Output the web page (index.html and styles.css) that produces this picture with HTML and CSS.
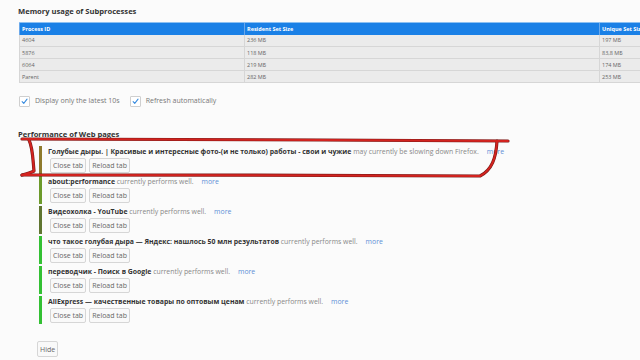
FILE: index.html
```html
<!DOCTYPE html>
<html lang="ru">
<head>
<meta charset="utf-8">
<title>about:performance</title>
<link rel="stylesheet" href="styles.css">
</head>
<body>
<div class="page">
  <h2 class="heading">Memory usage of Subprocesses</h2>
  <div class="mem-wrap">
  <table class="mem">
    <thead>
      <tr><th class="c-id">Process ID</th><th class="c-rss">Resident Set Size</th><th class="c-uss">Unique Set Size</th></tr>
    </thead>
    <tbody>
      <tr><td>4604</td><td>236 МБ</td><td>197 МБ</td></tr>
      <tr><td>5876</td><td>118 МБ</td><td>83,8 МБ</td></tr>
      <tr><td>6064</td><td>219 МБ</td><td>174 МБ</td></tr>
      <tr><td>Parent</td><td>282 МБ</td><td>253 МБ</td></tr>
    </tbody>
  </table>
  </div>

  <div class="opts">
    <label class="opt"><span class="cb"><svg viewBox="0 0 11 11" width="11" height="11"><path d="M2.6 5.6 L4.6 7.8 L8.6 2.6" fill="none" stroke="#3a8de0" stroke-width="1.3" stroke-linecap="round" stroke-linejoin="round"/></svg></span>Display only the latest 10s</label>
    <label class="opt"><span class="cb"><svg viewBox="0 0 11 11" width="11" height="11"><path d="M2.6 5.6 L4.6 7.8 L8.6 2.6" fill="none" stroke="#3a8de0" stroke-width="1.3" stroke-linecap="round" stroke-linejoin="round"/></svg></span>Refresh automatically</label>
  </div>

  <h2 class="heading heading-perf">Performance of Web pages</h2>
  <ul class="pages">
    <li class="entry bar-slow">
      <div class="title"><b>Голубые дыры. | Красивые и интересные фото-(и не только) работы - свои и чужие</b> <span class="msg">may currently be slowing down Firefox.</span><a class="more">more</a></div>
      <div class="btns"><button class="btn">Close tab</button><button class="btn">Reload tab</button></div>
    </li>
    <li class="entry bar-olive">
      <div class="title"><b>about:performance</b> <span class="msg">currently performs well.</span><a class="more">more</a></div>
      <div class="btns"><button class="btn">Close tab</button><button class="btn">Reload tab</button></div>
    </li>
    <li class="entry bar-dark">
      <div class="title"><b>Видеохолка - YouTube</b> <span class="msg">currently performs well.</span><a class="more">more</a></div>
      <div class="btns"><button class="btn">Close tab</button><button class="btn">Reload tab</button></div>
    </li>
    <li class="entry bar-green">
      <div class="title"><b>что такое голубая дыра — Яндекс: нашлось 50 млн результатов</b> <span class="msg">currently performs well.</span><a class="more">more</a></div>
      <div class="btns"><button class="btn">Close tab</button><button class="btn">Reload tab</button></div>
    </li>
    <li class="entry bar-green">
      <div class="title"><b>переводчик - Поиск в Google</b> <span class="msg">currently performs well.</span><a class="more">more</a></div>
      <div class="btns"><button class="btn">Close tab</button><button class="btn">Reload tab</button></div>
    </li>
    <li class="entry bar-green">
      <div class="title"><b>AliExpress — качественные товары по оптовым ценам</b> <span class="msg">currently performs well.</span><a class="more">more</a></div>
      <div class="btns"><button class="btn">Close tab</button><button class="btn">Reload tab</button></div>
    </li>
  </ul>

  <button class="btn hide">Hide</button>

  <svg class="annot" viewBox="0 0 640 360" width="640" height="360">
    <g fill="none" stroke-linecap="round" stroke-linejoin="round">
      <path d="M22 139 C 120 139, 350 140, 508 141" stroke="#7a1a18" stroke-width="3.2"/>
      <path d="M29 140 C 33 148, 33 162, 34 171 C 30 173, 26 174, 22 175" stroke="#7a1a18" stroke-width="3.2"/>
      <path d="M22 175 C 150 175, 350 175, 480 176 C 492 170, 496 158, 497 141" stroke="#7a1a18" stroke-width="3.2"/>
      <path d="M22 139 C 120 139, 350 140, 508 141" stroke="#d3231f" stroke-width="2"/>
      <path d="M29 140 C 33 148, 33 162, 34 171 C 30 173, 26 174, 22 175" stroke="#d3231f" stroke-width="2"/>
      <path d="M22 175 C 150 175, 350 175, 480 176 C 492 170, 496 158, 497 141" stroke="#d3231f" stroke-width="2"/>
    </g>
  </svg>
</div>
</body>
</html>
```

FILE: styles.css
```css
html, body {
  margin: 0;
  padding: 0;
  overflow: hidden;
  background: #fbfbfb;
}

body {
  width: 640px;
  height: 360px;
  font-family: "Open Sans", "Noto Sans", sans-serif;
  color: #555;
}

.page {
  position: relative;
  padding: 5px 0 0 18px;
  height: 355px;
}

.heading {
  margin: 0;
  font-size: 7.6px;
  line-height: 12px;
  font-weight: 700;
  color: #333;
}

.mem-wrap {
  margin-top: 5px;
  margin-left: 1px;
  width: 621px;
  overflow: hidden;
}

.mem {
  width: 680px;
  border-collapse: collapse;
  table-layout: fixed;
  font-size: 5.5px;
}

.mem tr { height: 12px; }

.mem th {
  background: #1a80e6;
  color: #fff;
  font-weight: 700;
  text-align: left;
  padding: 0 2px;
  border-top: 1px solid #8cc0f2;
  border-left: 1px solid #6aa8ea;
  white-space: nowrap;
  overflow: hidden;
}

.mem .c-id { width: 220px; }
.mem .c-rss { width: 350px; }

.mem td {
  background: #ebebeb;
  color: #666;
  padding: 0 2px;
  border-bottom: 1px solid #d6d6d6;
  border-left: 1px solid #d6d6d6;
}

.opts {
  margin-top: 12px;
  display: flex;
  gap: 10px;
  padding-left: 1px;
}

.opt {
  display: flex;
  align-items: center;
  gap: 5px;
  font-size: 7px;
  line-height: 12px;
  color: #777;
}

.cb {
  display: flex;
  width: 11px;
  height: 11px;
  box-sizing: border-box;
  border: 1px solid #cfcfcf;
  background: #fff;
  border-radius: 1px;
  align-items: center;
  justify-content: center;
}

.cb svg { display: block; }

.heading-perf {
  margin-top: 21px;
}

.pages {
  list-style: none;
  margin: 6px 0 0 21px;
  padding: 0;
  display: flex;
  flex-direction: column;
  gap: 2px;
}

.entry {
  border-left: 3px solid #3ac33a;
  padding: 0 0 1px 6px;
  height: 28px;
  box-sizing: border-box;
}

.bar-slow { border-left-color: #8e7a2c; }
.bar-olive { border-left-color: #6c9a2a; }
.bar-dark { border-left-color: #5f7530; }
.bar-green { border-left-color: #33c033; }

.title {
  font-size: 6.9px;
  line-height: 12px;
  white-space: nowrap;
  color: #888;
}

.title b {
  color: #333;
  font-weight: 700;
}

.msg { color: #888; }

.more {
  color: #5b8fd6;
  margin-left: 8px;
}

.btns {
  display: flex;
  gap: 3px;
  margin-left: 2px;
}

.btn {
  font-family: "Open Sans", "Noto Sans", sans-serif;
  font-size: 7px;
  height: 15px;
  padding: 0 2px;
  border: 1px solid #d6d6d6;
  border-radius: 2px;
  background: #f9f9f9;
  color: #666;
  line-height: 13px;
}

.hide {
  display: block;
  margin: 17px 0 0 19px;
  height: 16px;
  padding: 0 2px;
}

.annot {
  position: absolute;
  left: 0;
  top: 0;
  pointer-events: none;
}
```
